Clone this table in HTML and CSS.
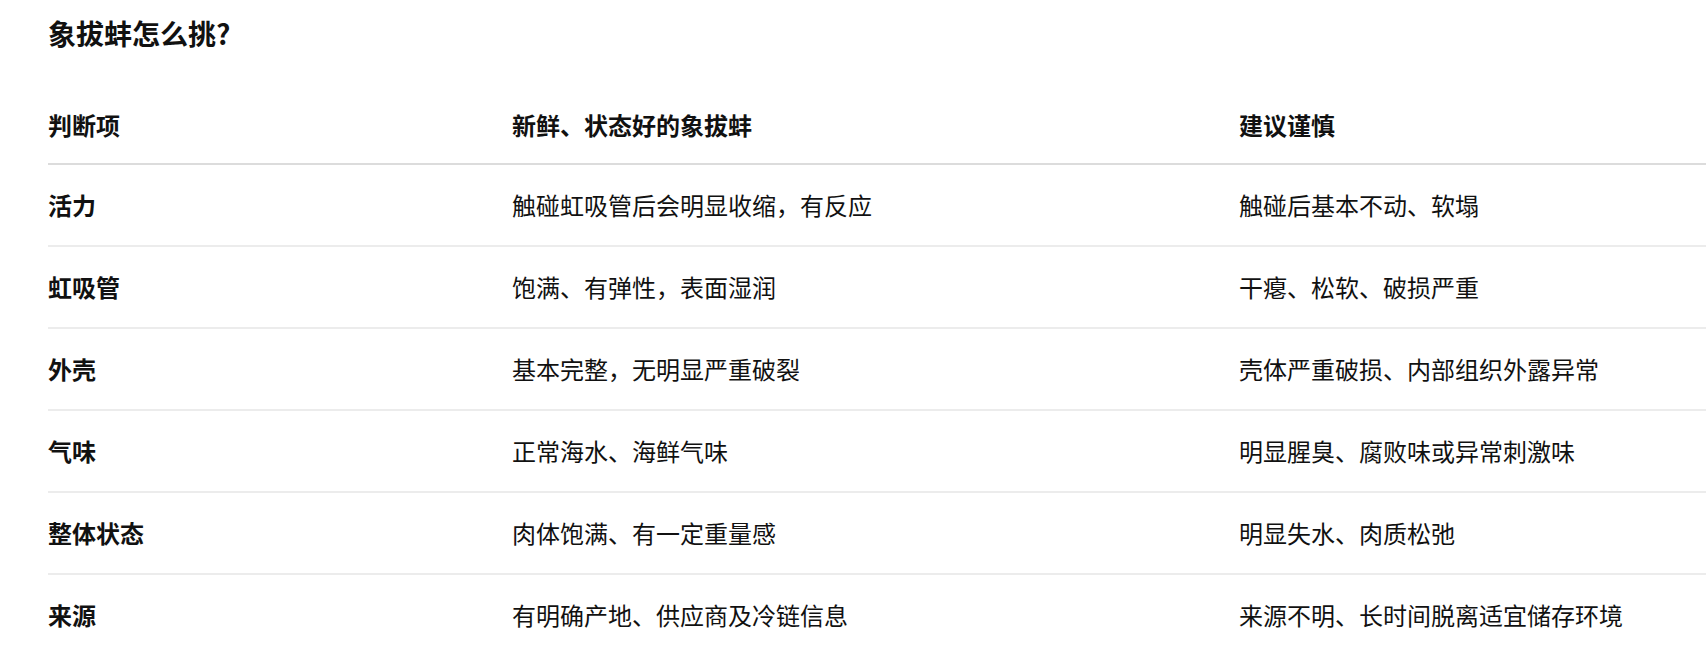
FILE: index.html
```html
<!DOCTYPE html>
<html lang="zh-CN">
<head>
<meta charset="utf-8">
<title>象拔蚌怎么挑?</title>
<link rel="stylesheet" href="styles.css">
</head>
<body>
<main class="page">
  <h1 class="title">象拔蚌怎么挑?</h1>
  <table class="guide">
    <colgroup>
      <col class="c1">
      <col class="c2">
      <col class="c3">
    </colgroup>
    <thead>
      <tr>
        <th>判断项</th>
        <th>新鲜、状态好的象拔蚌</th>
        <th>建议谨慎</th>
      </tr>
    </thead>
    <tbody>
      <tr>
        <td class="item">活力</td>
        <td>触碰虹吸管后会明显收缩，有反应</td>
        <td>触碰后基本不动、软塌</td>
      </tr>
      <tr>
        <td class="item">虹吸管</td>
        <td>饱满、有弹性，表面湿润</td>
        <td>干瘪、松软、破损严重</td>
      </tr>
      <tr>
        <td class="item">外壳</td>
        <td>基本完整，无明显严重破裂</td>
        <td>壳体严重破损、内部组织外露异常</td>
      </tr>
      <tr>
        <td class="item">气味</td>
        <td>正常海水、海鲜气味</td>
        <td>明显腥臭、腐败味或异常刺激味</td>
      </tr>
      <tr>
        <td class="item">整体状态</td>
        <td>肉体饱满、有一定重量感</td>
        <td>明显失水、肉质松弛</td>
      </tr>
      <tr>
        <td class="item">来源</td>
        <td>有明确产地、供应商及冷链信息</td>
        <td>来源不明、长时间脱离适宜储存环境</td>
      </tr>
    </tbody>
  </table>
</main>
</body>
</html>
```

FILE: styles.css
```css
html, body {
  margin: 0;
  padding: 0;
  background: #ffffff;
}

body {
  font-family: "Noto Sans CJK SC", "Noto Sans", "Liberation Sans", sans-serif;
  color: #111111;
}

.page {
  padding: 13px 0 0 48px;
}

.title {
  margin: 0 0 32px 0;
  font-size: 28px;
  line-height: 40px;
  font-weight: 700;
  color: #111111;
}

.guide {
  width: 100%;
  border-collapse: collapse;
  table-layout: fixed;
  font-size: 24px;
  line-height: 36px;
}

.c1 { width: 464px; }
.c2 { width: 727px; }

.guide th {
  text-align: left;
  font-weight: 700;
  padding: 22px 0 20px 0;
  border-bottom: 2px solid #dcdcdc;
}

.guide td {
  padding: 22px 0 22px 0;
  border-top: 2px solid #ececec;
  vertical-align: middle;
}

.guide tbody tr:first-child td {
  border-top: none;
}

.guide td.item {
  font-weight: 700;
}
```
